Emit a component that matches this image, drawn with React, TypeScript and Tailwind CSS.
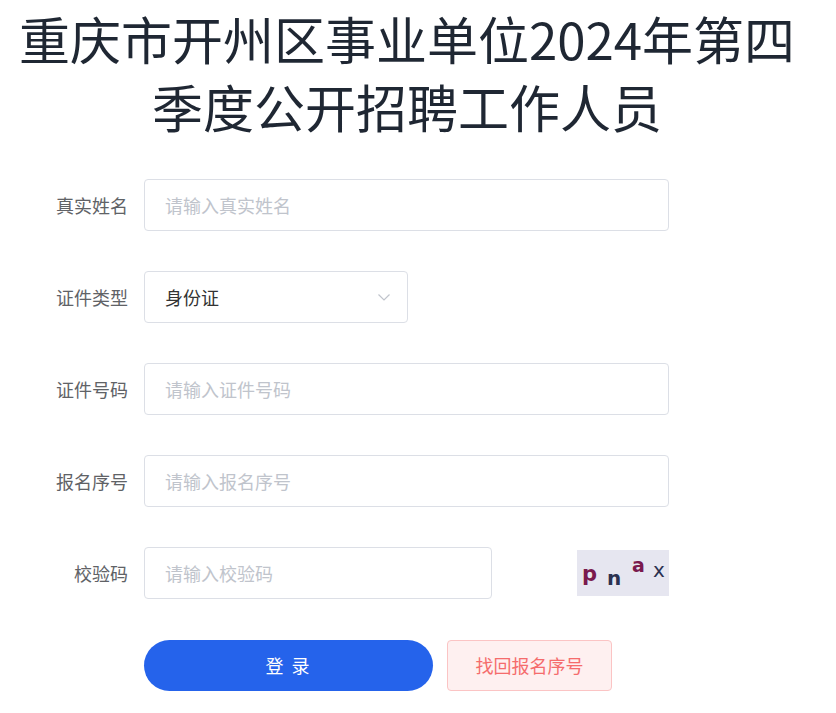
import React from "react";

const font = { fontFamily: '"Noto Sans CJK SC", "Noto Sans", sans-serif' };

function Row({ label, children }: { label: string; children: React.ReactNode }) {
  return (
    <div className="flex items-center h-[52px]">
      <div className="w-[128px] pr-0 text-right text-[18px] text-[#606266] shrink-0">{label}</div>
      <div className="ml-[16px] flex items-center">{children}</div>
    </div>
  );
}

function Input({ placeholder, width }: { placeholder: string; width: string }) {
  return (
    <input
      placeholder={placeholder}
      className={`${width} h-[52px] border border-[#dcdfe6] rounded-[4px] px-[20px] text-[18px] text-[#333] placeholder:text-[#c0c4cc] outline-none bg-white`}
      style={font}
    />
  );
}

export default function App() {
  return (
    <div className="w-[836px] h-[713px] bg-white overflow-hidden" style={font}>
      <h1 className="pt-[4px] text-center text-[51px] leading-[68px] text-[#1f2733] pl-0 pr-[22px]">
        重庆市开州区事业单位2024年第四
        <br />
        季度公开招聘工作人员
      </h1>
      <div className="mt-[39px] flex flex-col gap-[40px]">
        <Row label="真实姓名">
          <Input placeholder="请输入真实姓名" width="w-[525px]" />
        </Row>
        <Row label="证件类型">
          <div className="w-[264px] h-[52px] border border-[#dcdfe6] rounded-[4px] px-[20px] flex items-center justify-between">
            <span className="text-[18px] text-[#333]">身份证</span>
            <svg width="14" height="14" viewBox="0 0 14 14" fill="none" className="mr-[-4px]">
              <path d="M1.5 4.5 L7 10 L12.5 4.5" stroke="#c0c4cc" strokeWidth="1.2" />
            </svg>
          </div>
        </Row>
        <Row label="证件号码">
          <Input placeholder="请输入证件号码" width="w-[525px]" />
        </Row>
        <Row label="报名序号">
          <Input placeholder="请输入报名序号" width="w-[525px]" />
        </Row>
        <Row label="校验码">
          <Input placeholder="请输入校验码" width="w-[348px]" />
          <div className="ml-[85px] w-[92px] h-[46px] bg-[#e6e6f0]">
            <svg width="92" height="46" viewBox="0 0 92 46">
              <text x="5" y="31" fontSize="21" fill="#7a1a4e" fontFamily="DejaVu Sans, sans-serif" fontWeight="600">p</text>
              <text x="30" y="35" fontSize="20" fill="#2b3150" fontFamily="DejaVu Sans, sans-serif" fontWeight="600">n</text>
              <text x="55" y="22" fontSize="19" fill="#7a1a4e" fontFamily="DejaVu Sans, sans-serif" fontWeight="600">a</text>
              <text x="76" y="27" fontSize="20" fill="#2b3150" fontFamily="DejaVu Sans, sans-serif">x</text>
            </svg>
          </div>
        </Row>
      </div>
      <div className="mt-[41px] ml-[144px] flex items-center gap-[14px]">
        <button className="w-[289px] h-[51px] rounded-full bg-[#2563eb] text-white text-[18px] tracking-[2px]">
          登 录
        </button>
        <button className="w-[165px] h-[51px] rounded-[4px] bg-[#fef0f0] border border-[#fbc4c4] text-[#f56c6c] text-[18px]">
          找回报名序号
        </button>
      </div>
    </div>
  );
}
